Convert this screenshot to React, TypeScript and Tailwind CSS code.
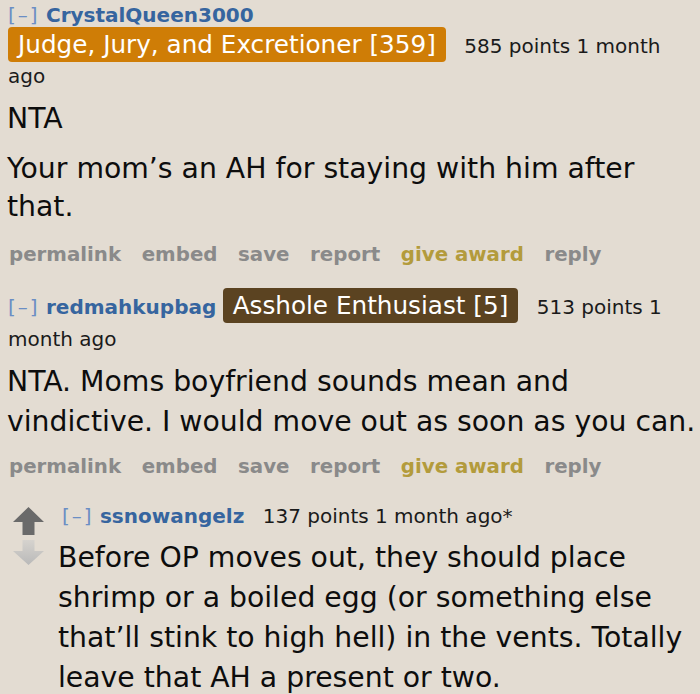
const meta = "font-['DejaVu_Sans',Verdana,sans-serif]"
const body = "font-['DejaVu_Sans',Verdana,sans-serif]"

function Actions({ className = '' }: { className?: string }) {
  const items = ['permalink', 'embed', 'save', 'report', 'give award', 'reply']
  return (
    <div className={`${meta} flex gap-[20.6px] pl-[9px] text-[19.8px] leading-[30px] font-bold text-[#8a8a8a] ${className}`}>
      {items.map((it) => (
        <span key={it} className={it === 'give award' ? 'text-[#b39b3c]' : ''}>
          {it}
        </span>
      ))}
    </div>
  )
}

function Tagline({ user, flair, flairClass, rest, className = '' }: { user: string; flair?: string; flairClass?: string; rest: string; className?: string }) {
  return (
    <div className={`${meta} text-[20px] text-[#1a1a1a] ${className}`}>
      <span className="tracking-[2px] text-[#6b8ec4]">[–]</span>{' '}
      <span className="font-bold text-[#36659f]">{user}</span>{' '}
      {flair && (
        <>
          <span className={`${body} ${flairClass} whitespace-nowrap rounded-[4px] px-[10px] py-[3px] text-[24.7px] text-white`}>{flair}</span>{' '}
        </>
      )}
      <span className="ml-[12px]">{rest}</span>
    </div>
  )
}

export default function App() {
  return (
    <div className="min-h-screen w-[700px] h-[694px] overflow-hidden bg-[#e3dcd2]">
      {/* comment 1 */}
      <div className="pl-[7px]">
        <Tagline
          user="CrystalQueen3000"
          flair="Judge, Jury, and Excretioner [359]"
          flairClass="bg-[#cf7d06]"
          rest="585 points 1 month ago"
          className="leading-[30px] pl-[1px] pr-[12px]"
        />
        <div className={`${body} text-[28.3px] text-[#0d0d0d]`}>
          <p className="mt-[9px] leading-[38px]">NTA</p>
          <p className="mt-[12px] leading-[38px]">Your mom’s an AH for staying with him after that.</p>
        </div>
      </div>
      <Actions className="mt-[14px]" />

      {/* comment 2 */}
      <div className="pl-[7px]">
        <Tagline
          user="redmahkupbag"
          flair="Asshole Enthusiast [5]"
          flairClass="bg-[#5b4321]"
          rest="513 points 1 month ago"
          className="mt-[20px] leading-[32px] pl-[1px]"
        />
        <p className={`${body} mr-[-8px] mt-[7px] text-[28.3px] leading-[40px] text-[#0d0d0d]`}>
          NTA. Moms boyfriend sounds mean and vindictive. I would move out as soon as you can.
        </p>
      </div>
      <Actions className="mt-[10px]" />

      {/* nested reply */}
      <div className="mt-[19px] flex">
        <div className="flex w-[58px] shrink-0 flex-col items-start pl-[13px] pt-[6px]">
          <svg width="31" height="28" viewBox="0 0 31 28">
            <path d="M15.5 0 L31 15 L21.5 15 L21.5 28 L9.5 28 L9.5 15 L0 15 Z" fill="#6a6a6a" />
          </svg>
          <svg width="31" height="25" viewBox="0 0 31 25" className="mt-[5px]">
            <defs>
              <linearGradient id="dn" x1="0" y1="0" x2="0" y2="1">
                <stop offset="0" stopColor="#d6d3ce" />
                <stop offset="1" stopColor="#b9b9b9" />
              </linearGradient>
            </defs>
            <path d="M9.5 0 L21.5 0 L21.5 11 L31 11 L15.5 25 L0 11 L9.5 11 Z" fill="url(#dn)" />
          </svg>
        </div>
        <div className="min-w-0 flex-1">
          <Tagline user="ssnowangelz" rest="137 points 1 month ago*" className="leading-[30px] pl-[4px]" />
          <p className={`${body} mt-[7px] pr-[6px] text-[28.3px] leading-[40px] text-[#0d0d0d]`}>
            Before OP moves out, they should place shrimp or a boiled egg (or something else that’ll stink to high hell) in the vents. Totally leave that AH a present or two.
          </p>
        </div>
      </div>
    </div>
  )
}
